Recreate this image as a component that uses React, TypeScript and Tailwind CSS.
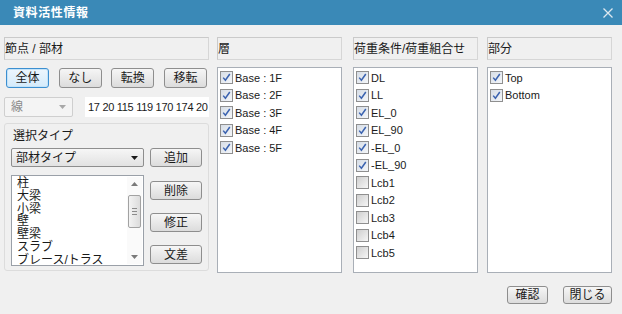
import React from 'react';

const layers = ['Base : 1F', 'Base : 2F', 'Base : 3F', 'Base : 4F', 'Base : 5F'];
const loads: [string, boolean][] = [
  ['DL', true],
  ['LL', true],
  ['EL_0', true],
  ['EL_90', true],
  ['-EL_0', true],
  ['-EL_90', true],
  ['Lcb1', false],
  ['Lcb2', false],
  ['Lcb3', false],
  ['Lcb4', false],
  ['Lcb5', false],
];
const parts = ['Top', 'Bottom'];
const memberTypes = ['柱', '大梁', '小梁', '壁', '壁梁', 'スラブ', 'ブレース/トラス'];

function Btn({ label, className = '', active = false }: { label: string; className?: string; active?: boolean }) {
  return (
    <button
      className={`flex items-center justify-center rounded-[3px] border text-[12px] text-[#1a1a1a] ${
        active
          ? 'border-[#3c8fd0] bg-linear-to-b from-[#edf6fd] to-[#d4ebfb] shadow-[inset_0_0_0_1px_#c4e3f9]'
          : 'border-[#8e8e8e] bg-linear-to-b from-[#f6f6f6] to-[#dcdcdc]'
      } ${className}`}
    >
      {label}
    </button>
  );
}

function Check({ checked }: { checked: boolean }) {
  return (
    <span
      className={`flex h-[13px] w-[13px] shrink-0 items-center justify-center border border-[#8f8f8f] ${
        checked ? 'bg-linear-to-br from-[#d6dde6] to-[#f4f6f9]' : 'bg-linear-to-br from-[#cfcfcf] to-[#f6f6f6]'
      }`}
    >
      {checked && (
        <svg width="9" height="9" viewBox="0 0 9 9">
          <path d="M1.2 4.6 L3.4 7.3 L7.8 1" stroke="#3b63b0" strokeWidth="1.5" fill="none" />
        </svg>
      )}
    </span>
  );
}

function Header({ label }: { label: string }) {
  return (
    <div className="flex h-[23px] items-center border border-[#d6d6d6] border-t-[#cacaca] border-l-[#cacaca] bg-[#f0f0f0] text-[12px] text-[#1a1a1a]">
      {label}
    </div>
  );
}

function CheckList({ items }: { items: [string, boolean][] }) {
  return (
    <div className="mt-[7px] h-[206px] border border-[#a9afb7] bg-white pl-[2px] pt-[1px]">
      {items.map(([label, checked]) => (
        <div key={label} className="flex h-[17.5px] items-center gap-[2px] text-[11px] text-[#1a1a1a]">
          <Check checked={checked} />
          <span>{label}</span>
        </div>
      ))}
    </div>
  );
}

function Arrow({ down = false, color = '#6b6b6b' }: { down?: boolean; color?: string }) {
  return (
    <svg width="7" height="4" viewBox="0 0 7 4">
      <path d={down ? 'M0 0 L7 0 L3.5 4 Z' : 'M0 4 L7 4 L3.5 0 Z'} fill={color} />
    </svg>
  );
}

export default function App() {
  return (
    <div className="flex h-[314px] w-[622px] flex-col bg-[#f0f0f0] font-['Liberation_Sans','Noto_Sans_CJK_JP',sans-serif]">
      {/* Title bar */}
      <div className="flex h-[25px] items-center justify-between bg-[#3a89b7] pl-[13px] pr-[9px]">
        <span className="text-[12px] font-bold tracking-[0.6px] text-white">資料活性情報</span>
        <svg width="10" height="10" viewBox="0 0 10 10">
          <path d="M0.5 0.5 L9.5 9.5 M9.5 0.5 L0.5 9.5" stroke="#dde8f0" strokeWidth="1.3" />
        </svg>
      </div>

      <div className="flex pl-[4px] pt-[12px]">
        {/* Left: nodes / members */}
        <div className="flex w-[205px] flex-col">
          <Header label="節点 / 部材" />
          <div className="mt-[8px] flex h-[20px] justify-between px-[2px]">
            <Btn label="全体" className="w-[43px]" active />
            <Btn label="なし" className="w-[43px]" />
            <Btn label="転換" className="w-[43px]" />
            <Btn label="移転" className="w-[43px]" />
          </div>
          <div className="mt-[9px] flex h-[20px]">
            <div className="flex w-[69px] items-center justify-between rounded-[2px] border border-[#cfcfcf] bg-[#f4f4f4] pl-[6px] pr-[6px] text-[12px] text-[#8a8a8a]">
              <span>線</span>
              <Arrow down color="#a8a8a8" />
            </div>
            <div className="ml-[12px] flex flex-1 items-center overflow-hidden whitespace-nowrap bg-white pl-[3px] text-[11px] tracking-[-0.3px] text-[#1a1a1a]">
              17 20 115 119 170 174 20
            </div>
          </div>
          <div className="mt-[6px] flex h-[148px] flex-col rounded-[3px] border border-[#dcdcdc] pl-[6px] pt-[4px]">
            <div className="pl-[2px] text-[12px] leading-[16px] text-[#1a1a1a]">選択タイプ</div>
            <div className="mt-[4px] flex h-[19px]">
              <div className="flex w-[133px] items-center justify-between rounded-[2px] border border-[#8e8e8e] bg-linear-to-b from-[#f6f6f6] to-[#e2e2e2] pl-[4px] pr-[5px] text-[12px] text-[#1a1a1a]">
                <span>部材タイプ</span>
                <Arrow down color="#1a1a1a" />
              </div>
              <Btn label="追加" className="ml-[6px] w-[52px]" />
            </div>
            <div className="mt-[8px] flex">
              <div className="flex h-[91px] w-[133px] border border-[#9aa0a8] bg-white">
                <div className="flex-1 overflow-hidden pl-[5px] pt-[1px] text-[12px] leading-[12.8px] text-[#1a1a1a]">
                  {memberTypes.map(t => (
                    <div key={t}>{t}</div>
                  ))}
                </div>
                <div className="my-[1px] mr-[1px] flex w-[15px] flex-col items-center bg-[#fafafa]">
                  <div className="flex h-[14px] items-center">
                    <Arrow color="#7a7a7a" />
                  </div>
                  <div className="mt-[4px] flex h-[33px] w-[13px] flex-col items-center justify-center gap-[2px] rounded-[2px] border border-[#a2a2a2] bg-linear-to-r from-[#f3f3f3] to-[#dcdcdc]">
                    <span className="h-px w-[5px] bg-[#8a8a8a]" />
                    <span className="h-px w-[5px] bg-[#8a8a8a]" />
                    <span className="h-px w-[5px] bg-[#8a8a8a]" />
                  </div>
                  <div className="flex-1" />
                  <div className="flex h-[14px] items-center">
                    <Arrow down color="#7a7a7a" />
                  </div>
                </div>
              </div>
              <div className="ml-[6px] flex flex-col pt-[6px]">
                <Btn label="削除" className="h-[19px] w-[52px]" />
                <Btn label="修正" className="mt-[13px] h-[19px] w-[52px]" />
                <Btn label="文差" className="mt-[13px] h-[19px] w-[52px]" />
              </div>
            </div>
          </div>
        </div>

        {/* Layers */}
        <div className="ml-[8px] flex w-[125px] flex-col">
          <Header label="層" />
          <CheckList items={layers.map(l => [l, true] as [string, boolean])} />
        </div>

        {/* Load cases */}
        <div className="ml-[11px] flex w-[125px] flex-col">
          <Header label="荷重条件/荷重組合せ" />
          <CheckList items={loads} />
        </div>

        {/* Parts */}
        <div className="ml-[9px] flex w-[125px] flex-col">
          <Header label="部分" />
          <CheckList items={parts.map(p => [p, true] as [string, boolean])} />
        </div>
      </div>

      <div className="mt-[13px] flex justify-end gap-[15px] pr-[10px]">
        <Btn label="確認" className="h-[18px] w-[41px]" />
        <Btn label="閉じる" className="h-[18px] w-[49px]" />
      </div>
    </div>
  );
}
